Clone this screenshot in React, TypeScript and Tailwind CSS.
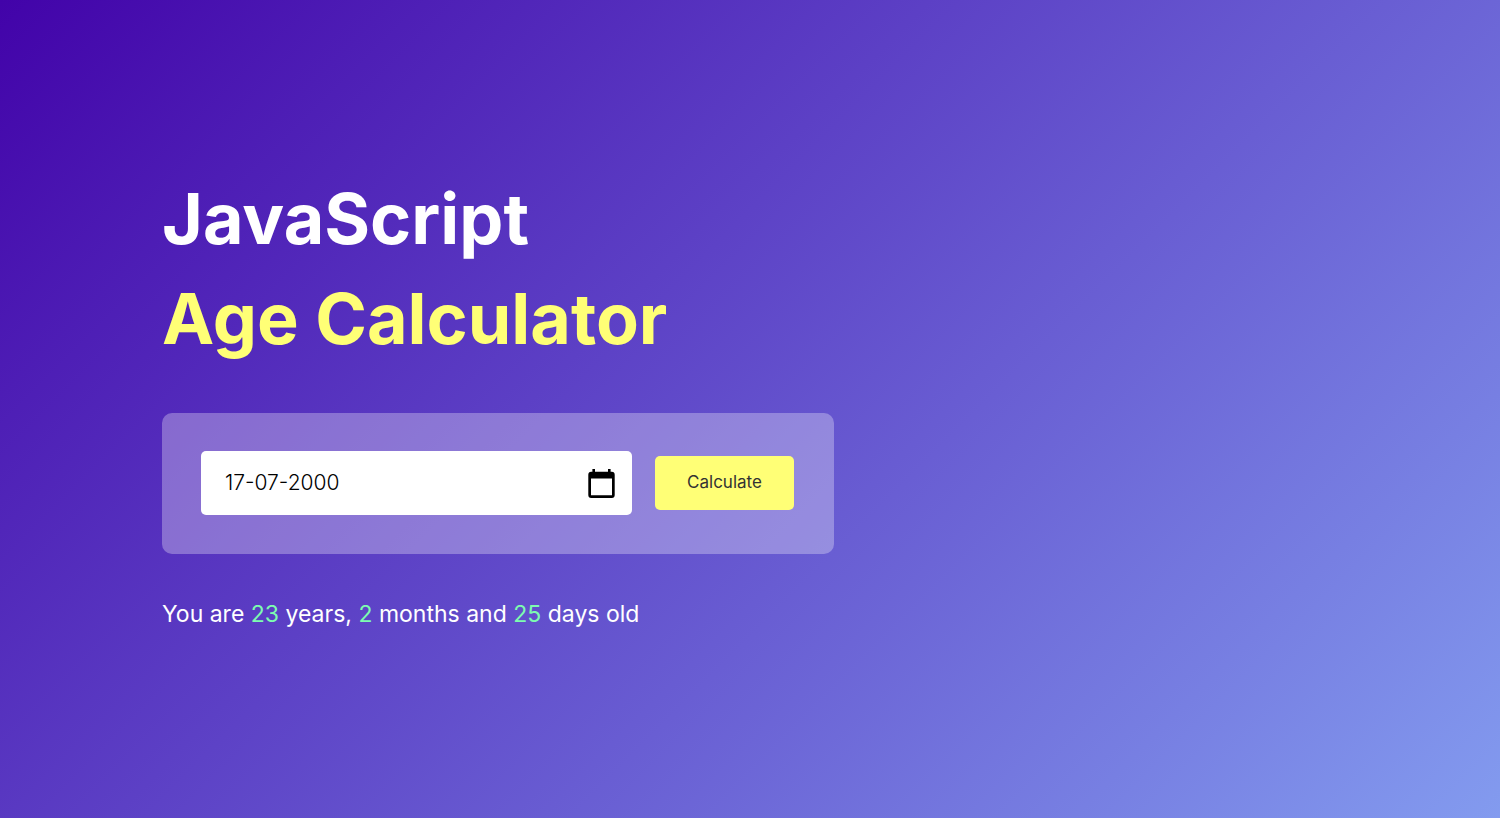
import { useState } from "react";

function CalendarIcon() {
  return (
    <svg viewBox="0 0 27 29" className="h-[29px] w-[27px]" fill="currentColor" aria-hidden="true">
      <path
        fillRule="evenodd"
        d="M4.4 0H7v2.8h13V0h2.6v2.8h1.2a2.9 2.9 0 0 1 2.9 2.9v20.4a2.9 2.9 0 0 1-2.9 2.9H3.2a2.9 2.9 0 0 1-2.9-2.9V5.7a2.9 2.9 0 0 1 2.9-2.9h1.2ZM3 9.5v16.8h21V9.5Z"
      />
    </svg>
  );
}

function Count({ value }: { value: number }) {
  return <span className="text-[#7dfcb0]">{value}</span>;
}

export default function App() {
  const [date, setDate] = useState("17-07-2000");
  return (
    <main className="flex min-h-screen items-center bg-[linear-gradient(135deg,#4203a9,#839bef)] px-[162px] pb-4 font-['Inter','Liberation_Sans',sans-serif] text-white">
      <div className="w-full max-w-[672px]">
        <h1 className="text-[70px] leading-[100px] font-bold">
          JavaScript
          <br />
          <span className="text-[#ffff76]">Age Calculator</span>
        </h1>
        <form
          className="mt-11 mb-10 flex items-center rounded-[10px] bg-[rgba(255,255,255,0.3)] pt-[38px] pr-10 pb-[39px] pl-[39px]"
          onSubmit={(e) => e.preventDefault()}
        >
          <div className="relative mr-[23px] flex-1">
            <input
              aria-label="Date of birth"
              type="text"
              value={date}
              onChange={(e) => setDate(e.target.value)}
              className="block h-16 w-full rounded-[5px] bg-white px-6 text-[21px] font-light text-black outline-none"
            />
            <button type="button" aria-label="Open calendar" className="absolute top-[18px] right-[17px] text-black">
              <CalendarIcon />
            </button>
          </div>
          <button type="submit" className="h-[54px] w-[139px] rounded-[5px] bg-[#ffff76] text-[17px] text-[#333333]">
            Calculate
          </button>
        </form>
        <p className="text-[23px] leading-10">
          You are <Count value={23} /> years, <Count value={2} /> months and <Count value={25} /> days old
        </p>
      </div>
    </main>
  );
}
